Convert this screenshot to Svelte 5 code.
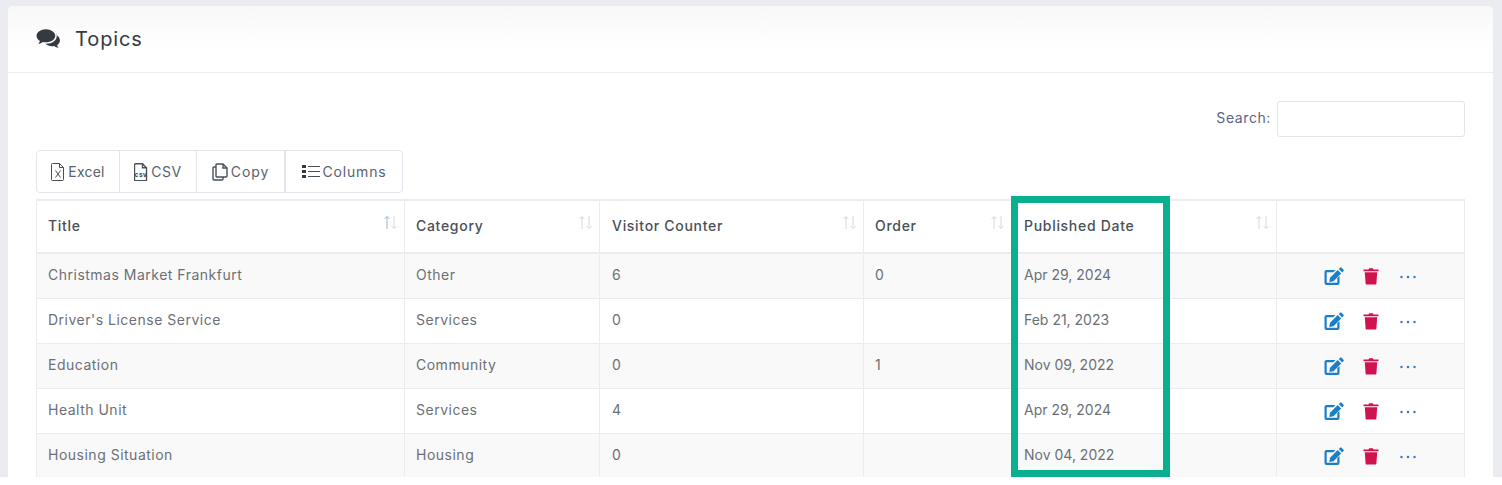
<script>
  const columns = [
    { label: "Title", width: 368 },
    { label: "Category", width: 195 },
    { label: "Visitor Counter", width: 264 },
    { label: "Order", width: 148 },
    { label: "Published Date", width: 265 },
    { label: "", width: 188 }
  ];

  const rows = [
    ["Christmas Market Frankfurt", "Other", "6", "0", "Apr 29, 2024"],
    ["Driver's License Service", "Services", "0", "", "Feb 21, 2023"],
    ["Education", "Community", "0", "1", "Nov 09, 2022"],
    ["Health Unit", "Services", "4", "", "Apr 29, 2024"],
    ["Housing Situation", "Housing", "0", "", "Nov 04, 2022"]
  ];
</script>

<div class="page">
  <section class="card">
    <header class="card-head">
      <svg class="head-icon" viewBox="0 0 24 20" width="25" height="21">
        <path d="M9.5 1C4.5 1 .5 3.900.5 7.400c0 2 1.300 3.800 3.300 5-.3.900-.8 1.800-1.600 2.700 1.600-.2 3.100-.8 4.300-1.800 1 .3 1.900.4 3 .4 5 0 9-2.800 9-6.300S14.500 1 9.500 1z" fill="#343a40"/>
        <path d="M19.900 6.200c.1.400.1.800.1 1.200 0 4.300-4.500 7.700-10 7.700h-1c1.500 1.500 3.800 2.400 6.300 2.400.8 0 1.600-.1 2.300-.3 1 .9 2.300 1.500 4 1.700-.7-.8-1.200-1.600-1.400-2.500 1.800-1.100 2.800-2.700 2.800-4.500 0-2.300-1.600-4.400-4.100-5.700z" fill="#343a40"/>
      </svg>
      <h1>Topics</h1>
    </header>

    <div class="card-body">
      <div class="search-row">
        <span class="search-label">Search:</span>
        <span class="search-input"></span>
      </div>

      <div class="btn-group">
        <span class="btn excel">
          <svg viewBox="0 0 14 18" width="14" height="18" fill="none" stroke="#495057" stroke-width="1">
            <path d="M1.500.5h7l4 4v12a1 1 0 0 1-1 1h-10a1 1 0 0 1-1-1v-15a1 1 0 0 1 1-1z"/>
            <path d="M8.500.5v4h4"/>
            <path d="M4.500 7.500l5 7M9.500 7.500l-5 7"/>
          </svg>
          Excel
        </span>
        <span class="btn csv">
          <svg viewBox="0 0 14 18" width="14" height="18" fill="none" stroke="#495057" stroke-width="1.400">
            <path d="M1.500.7h7l4 4v12a1 1 0 0 1-1 1h-10a1 1 0 0 1-1-1v-15a1 1 0 0 1 1-1z"/>
            <path d="M8.500.7v4h4"/>
            <text x="7" y="13.500" text-anchor="middle" font-size="6.500" font-weight="700" font-family="Liberation Sans, sans-serif" fill="#343a40" stroke="none">csv</text>
          </svg>
          CSV
        </span>
        <span class="btn copy">
          <svg viewBox="0 0 16 18" width="16" height="18" fill="none" stroke="#495057" stroke-width="1.400">
            <path d="M5 1h6l4 4v8a1 1 0 0 1-1 1H5a1 1 0 0 1-1-1V2a1 1 0 0 1 1-1z"/>
            <path d="M11 1v4h4"/>
            <path d="M4 4H2a1 1 0 0 0-1 1v11a1 1 0 0 0 1 1h8a1 1 0 0 0 1-1v-2"/>
          </svg>
          Copy
        </span>
        <span class="btn columns">
          <svg viewBox="0 0 18 15" width="18" height="15">
            <g fill="#343a40">
              <rect x="0" y="1" width="4" height="3"/>
              <rect x="0" y="6" width="4" height="3"/>
              <rect x="0" y="11" width="4" height="3"/>
            </g>
            <g stroke="#495057" stroke-width="1.200">
              <path d="M6 2.500h12M6 7.500h12M6 12.500h12"/>
            </g>
          </svg>
          Columns
        </span>
      </div>

      <div class="table-wrap">
        <table>
          <thead>
            <tr>
              {#each columns as col, i}
                <th style="width: {col.width}px">
                  {col.label}
                  {#if i < 5}
                    <svg class="sort" viewBox="0 0 15 15" width="15" height="15" fill="none" stroke-width="1">
                      <path d="M4 14V1.500M1.500 4L4 1.500 6.500 4" stroke={i === 0 ? "#9fb4c8" : "#d8d8dc"}/>
                      <path d="M11 1v12.500M8.500 11l2.500 2.500 2.500-2.500" stroke="#d8d8dc"/>
                    </svg>
                  {/if}
                </th>
              {/each}
            </tr>
          </thead>
          <tbody>
            {#each rows as row}
              <tr>
                {#each row as cell, c}
                  <td class:date={c === 4}>{cell}</td>
                {/each}
                <td class="actions">
                  <div class="action-row">
                    <svg viewBox="0 0 20 18" width="20" height="18">
                      <path d="M2.500 3h9l-2.200 2.200H2.700v10.600h10.600v-4.700l2.200-2.200v7.100a2 2 0 0 1-2 2h-11a2 2 0 0 1-2-2V5a2 2 0 0 1 2-2z" fill="#1b7ec9"/>
                      <path d="M13.700 3l3.500 3.500-7.700 7.700-4.200.7.700-4.200z" fill="#1b7ec9"/>
                      <path d="M14.800 2l1.300-1.300a1 1 0 0 1 1.400 0l2 2a1 1 0 0 1 0 1.400l-1.300 1.300z" fill="#1b7ec9"/>
                    </svg>
                    <svg viewBox="0 0 16 18" width="16" height="18">
                      <path d="M.5 2.500h5l.6-1.200h3.800l.6 1.200h5v1.700h-15z" fill="#d0134f"/>
                      <path d="M1.800 5.200h12.400l-.8 11.200a1.300 1.300 0 0 1-1.300 1.200H3.900a1.300 1.300 0 0 1-1.300-1.200z" fill="#d0134f"/>
                    </svg>
                    <svg class="dots" viewBox="0 0 16 4" width="16" height="4">
                      <circle cx="1.500" cy="2" r="1.200" fill="#2a78c8"/>
                      <circle cx="8" cy="2" r="1.200" fill="#2a78c8"/>
                      <circle cx="14.500" cy="2" r="1.200" fill="#2a78c8"/>
                    </svg>
                  </div>
                </td>
              </tr>
            {/each}
          </tbody>
        </table>
      </div>
    </div>
  </section>

  <div class="highlight"></div>
</div>

<style>
  :global(body) {
    margin: 0;
    background: #fff;
  }

  .page {
    position: relative;
    height: 477px;
    overflow: hidden;
    box-sizing: border-box;
    padding: 6px 9px 0 8px;
    background: #ebebf2;
    font-family: Inter, "Open Sans", sans-serif;
    color: #6c7076;
  }

  .card {
    height: 471px;
    background: #fff;
    border-radius: 5px 5px 0 0;
    overflow: hidden;
  }

  .card-head {
    display: flex;
    align-items: center;
    gap: 14px;
    box-sizing: border-box;
    height: 67px;
    padding: 0 28px;
    background: linear-gradient(#f8f8f8, #fff 70%);
    border-bottom: 1px solid #ebebf0;
  }

  .head-icon {
    margin-top: -2px;
  }

  h1 {
    margin: 0;
    font-size: 20px;
    font-weight: 400;
    letter-spacing: 0.9px;
    color: #343a40;
  }

  .card-body {
    padding: 28px 28px 0;
  }

  .search-row {
    display: flex;
    justify-content: flex-end;
    align-items: center;
    gap: 6px;
    height: 36px;
  }

  .search-label {
    padding-bottom: 3px;
    font-size: 14px;
    letter-spacing: 0.6px;
    color: #5d6384;
  }

  .search-input {
    box-sizing: border-box;
    width: 188px;
    height: 36px;
    border: 1px solid #e2e5ec;
    border-radius: 3px;
  }

  .btn-group {
    display: inline-flex;
    height: 43px;
    margin-top: 13px;
    border: 1px solid #e2e5ec;
    border-radius: 4px;
    box-sizing: border-box;
    vertical-align: top;
  }

  .btn {
    display: flex;
    align-items: center;
    justify-content: center;
    gap: 3px;
    box-sizing: border-box;
    font-size: 14px;
    letter-spacing: 0.5px;
    color: #5a6270;
    border-right: 1px solid #e2e5ec;
  }

  .excel { width: 83px; letter-spacing: 0.2px; }
  .csv { width: 77px; }
  .copy { width: 89px; letter-spacing: 0.9px; border-right-width: 2px; }
  .columns { width: 116px; letter-spacing: 0.8px; border-right: 0; }

  .table-wrap {
    margin-top: 6px;
  }

  table {
    width: 1428px;
    table-layout: fixed;
    border-collapse: collapse;
    font-size: 14px;
  }

  th, td {
    box-sizing: border-box;
    padding: 0 11px;
    border: 1px solid #ebebf0;
    text-align: left;
  }

  th:nth-child(3), td:nth-child(3),
  th:nth-child(5), td:nth-child(5) {
    padding-left: 12px;
  }

  th {
    position: relative;
    height: 53px;
    padding-bottom: 2px;
    font-weight: 500;
    letter-spacing: 0.7px;
    color: #495057;
    border-top-width: 2px;
    border-bottom-width: 2px;
  }

  td {
    height: 45px;
    padding-bottom: 3px;
    letter-spacing: 0.5px;
  }

  td.date {
    letter-spacing: 0;
  }

  td.actions {
    padding-top: 1px;
    padding-bottom: 0;
  }

  tbody tr:nth-child(odd) {
    background: #f9f9f9;
  }

  .sort {
    position: absolute;
    top: 14px;
    right: 6px;
  }

  .action-row {
    display: flex;
    align-items: center;
    gap: 19px;
    padding-left: 36px;
  }

  .dots {
    margin-top: 2px;
    margin-left: 2px;
  }

  .highlight {
    position: absolute;
    left: 1011px;
    top: 196px;
    width: 159px;
    height: 281px;
    box-sizing: border-box;
    border: 7px solid #0aaf8f;
  }
</style>
